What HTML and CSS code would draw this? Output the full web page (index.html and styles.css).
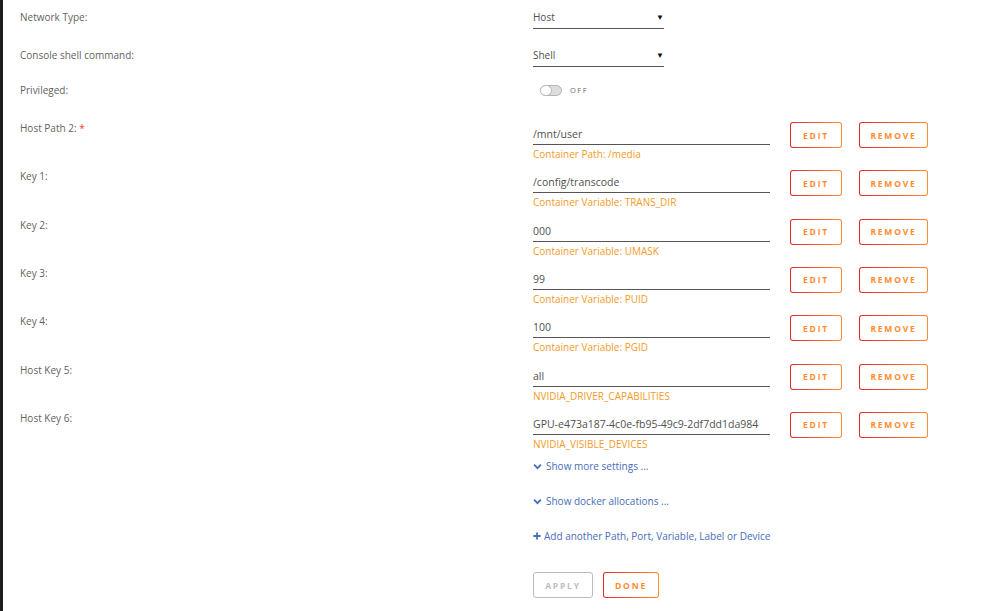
FILE: index.html
```html
<!DOCTYPE html>
<html lang="en">
<head>
    <meta charset="UTF-8">
    <meta name="viewport" content="width=device-width, initial-scale=1.0">
    <title>Container Settings</title>
    <link rel="stylesheet" href="styles.css">
</head>
<body>
    <div class="page">
        <div class="row row-select">
            <label class="label">Network Type:</label>
            <div class="select"><span>Host</span><span class="caret">&#9660;</span></div>
        </div>

        <div class="row row-select">
            <label class="label">Console shell command:</label>
            <div class="select"><span>Shell</span><span class="caret">&#9660;</span></div>
        </div>

        <div class="row row-toggle">
            <label class="label">Privileged:</label>
            <div class="toggle-wrap">
                <span class="toggle"></span>
                <span class="toggle-text">OFF</span>
            </div>
        </div>

        <div class="row row-config">
            <label class="label">Host Path 2: <span class="required">*</span></label>
            <div class="field">
                <div class="input">/mnt/user</div>
                <div class="caption">Container Path: /media</div>
            </div>
            <div class="btns">
                <button class="btn btn-edit">Edit</button>
                <button class="btn btn-remove">Remove</button>
            </div>
        </div>

        <div class="row row-config">
            <label class="label">Key 1:</label>
            <div class="field">
                <div class="input">/config/transcode</div>
                <div class="caption">Container Variable: TRANS_DIR</div>
            </div>
            <div class="btns">
                <button class="btn btn-edit">Edit</button>
                <button class="btn btn-remove">Remove</button>
            </div>
        </div>

        <div class="row row-config">
            <label class="label">Key 2:</label>
            <div class="field">
                <div class="input">000</div>
                <div class="caption">Container Variable: UMASK</div>
            </div>
            <div class="btns">
                <button class="btn btn-edit">Edit</button>
                <button class="btn btn-remove">Remove</button>
            </div>
        </div>

        <div class="row row-config">
            <label class="label">Key 3:</label>
            <div class="field">
                <div class="input">99</div>
                <div class="caption">Container Variable: PUID</div>
            </div>
            <div class="btns">
                <button class="btn btn-edit">Edit</button>
                <button class="btn btn-remove">Remove</button>
            </div>
        </div>

        <div class="row row-config">
            <label class="label">Key 4:</label>
            <div class="field">
                <div class="input">100</div>
                <div class="caption">Container Variable: PGID</div>
            </div>
            <div class="btns">
                <button class="btn btn-edit">Edit</button>
                <button class="btn btn-remove">Remove</button>
            </div>
        </div>

        <div class="row row-config">
            <label class="label">Host Key 5:</label>
            <div class="field">
                <div class="input">all</div>
                <div class="caption">NVIDIA_DRIVER_CAPABILITIES</div>
            </div>
            <div class="btns">
                <button class="btn btn-edit">Edit</button>
                <button class="btn btn-remove">Remove</button>
            </div>
        </div>

        <div class="row row-config">
            <label class="label">Host Key 6:</label>
            <div class="field">
                <div class="input">GPU-e473a187-4c0e-fb95-49c9-2df7dd1da984</div>
                <div class="caption">NVIDIA_VISIBLE_DEVICES</div>
            </div>
            <div class="btns">
                <button class="btn btn-edit">Edit</button>
                <button class="btn btn-remove">Remove</button>
            </div>
        </div>

        <div class="links">
            <a class="link" href="#">
                <svg class="icon" viewBox="0 0 10 10" width="9" height="9"><path d="M1.2 3 L5 6.8 L8.8 3" fill="none" stroke="currentColor" stroke-width="2"/></svg>
                Show more settings ...
            </a>
            <a class="link" href="#">
                <svg class="icon" viewBox="0 0 10 10" width="9" height="9"><path d="M1.2 3 L5 6.8 L8.8 3" fill="none" stroke="currentColor" stroke-width="2"/></svg>
                Show docker allocations ...
            </a>
            <a class="link link-add" href="#">
                <svg class="icon" viewBox="0 0 10 10" width="8" height="8"><path d="M5 0.5 V9.5 M0.5 5 H9.5" fill="none" stroke="currentColor" stroke-width="2.2"/></svg>
                Add another Path, Port, Variable, Label or Device
            </a>
        </div>

        <div class="actions">
            <button class="btn btn-apply">Apply</button>
            <button class="btn btn-done">Done</button>
        </div>
    </div>
</body>
</html>
```

FILE: styles.css
```css
body {
    margin: 0;
    background-color: #fff;
    border-left: 3px solid #1d1d1d;
    min-height: 611px;
    box-sizing: border-box;
    font-family: 'Open Sans', 'Noto Sans', sans-serif;
    font-size: 10px;
    color: #5f5f5f;
}

.page {
    padding: 10px 0 0 17px;
}

.row {
    display: grid;
    grid-template-columns: 513px 237px auto;
    align-items: start;
}

.label {
    line-height: 14px;
    color: #5f5f5f;
}

.required {
    color: #f03a3a;
}

/* dropdowns */
.row-select {
    margin-bottom: 19px;
}

.row-select + .row-toggle {
    margin-top: -3px;
}

.select {
    width: 131px;
    display: flex;
    justify-content: space-between;
    line-height: 14px;
    padding-bottom: 4px;
    border-bottom: 1px solid #555;
    color: #505050;
}

.caret {
    font-size: 8px;
    color: #111;
    padding-right: 0;
}

/* on/off switch */
.row-toggle {
    margin-bottom: 24px;
}

.toggle-wrap {
    display: flex;
    align-items: center;
    height: 14px;
    padding-left: 7px;
}

.toggle {
    position: relative;
    width: 20px;
    height: 9px;
    border: 1px solid #b5b5b5;
    border-radius: 6px;
    background-color: #ddd;
}

.toggle::before {
    content: "";
    position: absolute;
    left: -1px;
    top: -1px;
    width: 10px;
    height: 9px;
    border: 1px solid #b5b5b5;
    border-radius: 6px;
    background-color: #fff;
}

.toggle-text {
    margin-left: 8px;
    font-size: 7.5px;
    letter-spacing: 1.5px;
    color: #666;
}

/* path / variable rows */
.row-config {
    height: 48.33px;
}

.field {
    padding-top: 6px;
}

.input {
    font-size: 10.5px;
    line-height: 14px;
    padding-bottom: 3px;
    border-bottom: 1px solid #555;
    color: #505050;
    white-space: nowrap;
}

.caption {
    margin-top: 2px;
    line-height: 14px;
    color: #f39a26;
}

.btns {
    display: flex;
    gap: 17px;
    margin-left: 20px;
    margin-top: 1px;
}

.btn {
    height: 26px;
    padding: 0;
    font-family: 'Open Sans', 'Noto Sans', sans-serif;
    font-size: 8.5px;
    font-weight: 700;
    letter-spacing: 1.8px;
    text-transform: uppercase;
    color: #ff8c2f;
    border: 1px solid transparent;
    border-radius: 3px;
    background: linear-gradient(#fff, #fff) padding-box,
                linear-gradient(90deg, #e22828, #ff8c2f) border-box;
    cursor: pointer;
}

.btn-edit {
    width: 52px;
}

.btn-remove {
    width: 69px;
}

/* links below the list */
.links {
    display: flex;
    flex-direction: column;
    align-items: flex-start;
    padding-left: 513px;
}

.link {
    display: flex;
    align-items: center;
    gap: 4px;
    line-height: 14px;
    margin-bottom: 21px;
    color: #486dba;
    text-decoration: none;
}

.link-add {
    gap: 3px;
    margin-bottom: 29px;
}

.actions {
    display: flex;
    gap: 10px;
    padding-left: 513px;
}

.btn-apply {
    width: 60px;
    color: #bdbdbd;
    border: 1px solid #bcbcbc;
    background: #fff;
}

.btn-done {
    width: 56px;
}
```
